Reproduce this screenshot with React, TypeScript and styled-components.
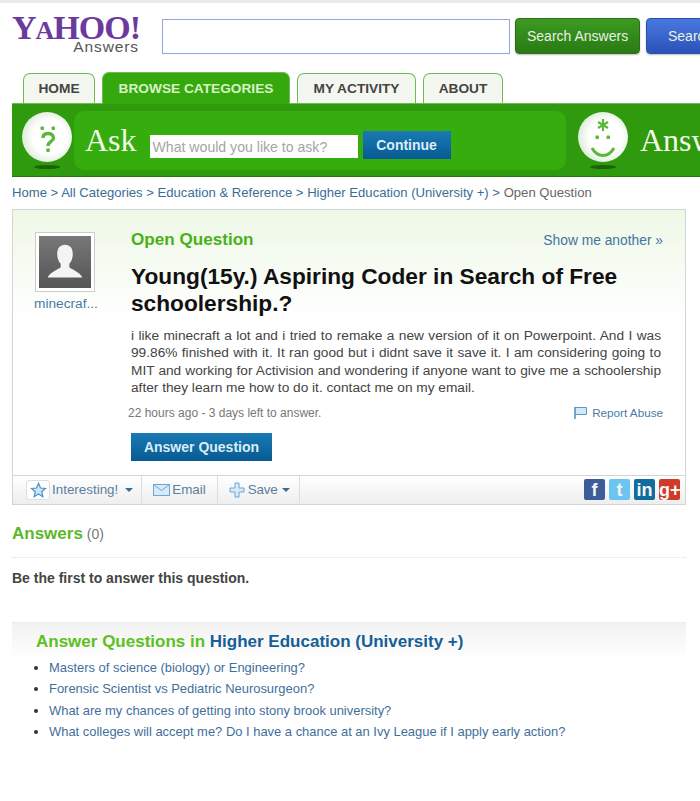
import React from 'react';
import styled, { createGlobalStyle } from 'styled-components';

const GlobalStyle = createGlobalStyle`
  html, body { margin: 0; padding: 0; background: #fff; }
  body { font-family: "Liberation Sans", Arial, sans-serif; overflow: hidden; }
`;

const Page = styled.div`
  width: 700px;
  height: 801px;
  overflow: hidden;
  border-top: 3px solid #e9e9ee;
  box-sizing: border-box;
`;

const Header = styled.header`
  display: flex;
  align-items: flex-start;
  height: 70px;
  padding: 15px 0 0 12px;
  box-sizing: border-box;
  white-space: nowrap;
`;

const Logo = styled.div`
  width: 150px;
  flex: none;
  margin-top: -2px;
`;

const LogoMark = styled.div`
  font: bold 34px/24px "Liberation Serif", serif;
  color: #6b3a9e;
  letter-spacing: -1px;
  height: 24px;
  & small { font-size: 26px; }
`;

const LogoSub = styled.div`
  font-size: 15.5px;
  line-height: 14px;
  letter-spacing: 0.9px;
  color: #555;
  width: 127px;
  text-align: right;
`;

const SearchInput = styled.div`
  width: 348px;
  height: 35px;
  flex: none;
  box-sizing: border-box;
  border: 1px solid #8ea8e8;
  margin-top: 1px;
  background: #fff;
`;

const SearchButton = styled.div<{ $tone: 'green' | 'blue' }>`
  flex: none;
  width: ${(p) => (p.$tone === 'green' ? '125px' : '90px')};
  height: 36px;
  margin-left: ${(p) => (p.$tone === 'green' ? '5px' : '6px')};
  padding-left: ${(p) => (p.$tone === 'green' ? '11px' : '21px')};
  box-sizing: border-box;
  border-radius: 4px;
  font-size: 14px;
  line-height: 35px;
  color: #e6f2e2;
  background: ${(p) =>
    p.$tone === 'green'
      ? 'linear-gradient(#3c9a22, #2a7a14)'
      : 'linear-gradient(#4a78e0, #2a52b8)'};
  border: 1px solid ${(p) => (p.$tone === 'green' ? '#2b6e18' : '#2a4fa8')};
  box-shadow: 0 1px 2px rgba(0, 0, 0, 0.25);
`;

const Tabs = styled.nav`
  display: flex;
  align-items: flex-end;
  gap: 7px;
  height: 30px;
  padding-left: 23px;
  white-space: nowrap;
`;

const Tab = styled.div<{ $active?: boolean; $width: number }>`
  width: ${(p) => p.$width}px;
  height: ${(p) => (p.$active ? '32px' : '30px')};
  box-sizing: border-box;
  text-align: center;
  font-weight: bold;
  font-size: 13.7px;
  line-height: ${(p) => (p.$active ? '31px' : '30px')};
  border-radius: 7px 7px 0 0;
  border: 1px solid #6fba55;
  border-bottom: none;
  color: ${(p) => (p.$active ? '#d8f2c4' : '#444')};
  background: ${(p) => (p.$active ? '#35a80e' : '#f4f7ef')};
  ${(p) => p.$active && 'margin-bottom: -1px; position: relative;'}
`;

const AskBand = styled.section`
  display: flex;
  align-items: center;
  height: 74px;
  margin-left: 12px;
  background: #2f9a0d;
  border-top: 1px solid #6fba55;
  border-bottom: 1px solid #25760c;
  box-sizing: border-box;
  white-space: nowrap;
  overflow: hidden;
`;

const Face = styled.div<{ $first?: boolean }>`
  position: relative;
  flex: none;
  width: 50px;
  height: 50px;
  margin-top: -6px;
  margin-left: ${(p) => (p.$first ? '10px' : '0')};
  border-radius: 50%;
  background: radial-gradient(circle at 55% 50%, #fff 0 45%, #dcebd8 75%, #f2f7ef 100%);
  & svg { display: block; }
  &::after {
    content: '';
    position: absolute;
    left: 12px;
    bottom: -7px;
    width: 26px;
    height: 4px;
    border-radius: 50%;
    background: #1d6208;
  }
`;

const AskPanel = styled.div`
  display: flex;
  align-items: center;
  flex: none;
  width: 492px;
  height: 59px;
  margin-left: 2px;
  margin-right: 12px;
  padding-left: 11px;
  box-sizing: border-box;
  background: #35ad0e;
  border-radius: 10px;
`;

const AskWord = styled.div`
  font: 32px/40px "Liberation Serif", serif;
  color: #f3fbe8;
  flex: none;
`;

const AskInput = styled.div`
  flex: none;
  width: 208px;
  height: 23px;
  margin: 12px 0 0 13px;
  padding-left: 3px;
  box-sizing: border-box;
  background: #fff;
  color: #a5a5a5;
  font-size: 14.1px;
  line-height: 24px;
`;

const BlueButton = styled.div<{ $width: number; $height: number }>`
  flex: none;
  width: ${(p) => p.$width}px;
  height: ${(p) => p.$height}px;
  line-height: ${(p) => p.$height}px;
  text-align: center;
  font-weight: bold;
  font-size: 14px;
  color: #dcecf6;
  background: linear-gradient(#1a7ab4, #075a92);
`;

const ContinueButton = styled(BlueButton)`
  margin: 10px 0 0 5px;
`;

const AnswerWord = styled(AskWord)`
  margin-left: 12px;
`;

const Breadcrumb = styled.div`
  margin: 8px 0 8px 12px;
  font-size: 13.1px;
  line-height: 16px;
  height: 16px;
  color: #3a6d96;
  white-space: nowrap;
  & span { color: #666; }
`;

const Card = styled.article`
  width: 674px;
  margin-left: 12px;
  box-sizing: border-box;
  border: 1px solid #d4d4d4;
  background: linear-gradient(#eef8e6 0, #fff 110px);
`;

const CardBody = styled.div`
  display: flex;
  height: 265px;
  box-sizing: border-box;
`;

const Asker = styled.div`
  width: 118px;
  flex: none;
  padding: 22px 0 0 22px;
  box-sizing: border-box;
`;

const Avatar = styled.div`
  width: 52px;
  height: 52px;
  box-sizing: content-box;
  padding: 3px;
  border: 1px solid #ccc;
  background: #fff;
  & svg { display: block; }
`;

const AskerName = styled.div`
  margin: 4px 0 0 -1px;
  font-size: 13.7px;
  line-height: 16px;
  color: #4a7ba6;
`;

const QuestionMain = styled.div`
  flex: 1;
  padding: 19px 22px 0 0;
  min-width: 0;
`;

const QuestionTop = styled.div`
  display: flex;
  justify-content: space-between;
  align-items: baseline;
`;

const OpenLabel = styled.div`
  font-weight: bold;
  font-size: 17.1px;
  line-height: 22px;
  color: #49b118;
`;

const ShowAnother = styled.div`
  font-size: 13.8px;
  color: #3f74a3;
  white-space: nowrap;
`;

const Title = styled.h1`
  margin: 12px 0 0;
  font-size: 22.7px;
  line-height: 27px;
  font-weight: bold;
  color: #111;
  white-space: nowrap;
`;

const Description = styled.p`
  margin: 10px 0 0;
  width: 530px;
  font-size: 13.7px;
  line-height: 17.4px;
  color: #444;
  text-align: justify;
`;

const MetaRow = styled.div`
  display: flex;
  justify-content: space-between;
  align-items: center;
  margin: 7px 0 0 -3px;
  height: 18px;
`;

const MetaText = styled.div`
  font-size: 12px;
  color: #777;
`;

const ReportLink = styled.div`
  display: flex;
  align-items: center;
  gap: 5px;
  font-size: 11.7px;
  color: #4a7ba6;
`;

const AnswerButton = styled(BlueButton)`
  margin-top: 11px;
`;

const ActionBar = styled.div`
  display: flex;
  align-items: stretch;
  height: 29px;
  border-top: 1px solid #d4d4d4;
  background: linear-gradient(#fff, #eeeeee);
  padding: 0 0 1px 13px;
  box-sizing: border-box;
  white-space: nowrap;
`;

const ActionItem = styled.div<{ $pad: number }>`
  display: flex;
  align-items: center;
  gap: 2px;
  padding-right: ${(p) => p.$pad}px;
  margin-right: 11px;
  border-right: 1px solid #ddd;
  font-size: 13.4px;
  color: #5a7f9e;
`;

const StarBox = styled.span`
  display: flex;
  align-items: center;
  justify-content: center;
  width: 24px;
  height: 20px;
  box-sizing: border-box;
  border: 1px solid #ddd;
  border-radius: 3px;
  background: #fff;
`;

const Caret = styled.span<{ $gap: number }>`
  width: 0;
  height: 0;
  margin-left: ${(p) => p.$gap}px;
  border-left: 4px solid transparent;
  border-right: 4px solid transparent;
  border-top: 4px solid #3a6d96;
`;

const SaveLabel = styled.span`
  margin-left: 1px;
  letter-spacing: -0.2px;
`;

const Socials = styled.div`
  display: flex;
  align-items: center;
  gap: 4px;
  margin-left: auto;
  padding-right: 5px;
`;

const Social = styled.div<{ $bg: string }>`
  width: 21px;
  height: 21px;
  border-radius: 2px;
  background: ${(p) => p.$bg};
  color: #f5f5f5;
  text-align: center;
  font-weight: bold;
  font-size: 18px;
  line-height: 23px;
  overflow: hidden;
`;

const AnswersHead = styled.div`
  margin: 19px 14px 0 12px;
  height: 33px;
  border-bottom: 1px dotted #ddd;
  font-size: 14px;
  color: #777;
  & b { font-size: 17px; color: #5cb82a; }
`;

const FirstNote = styled.div`
  margin: 12px 0 0 12px;
  font-weight: bold;
  font-size: 14px;
  line-height: 16px;
  color: #444;
`;

const RelatedBox = styled.section`
  width: 674px;
  margin: 36px 0 0 12px;
  border-top: 1px dotted #ddd;
  background: linear-gradient(#f2f2f2, #fff 36px);
  padding-top: 8px;
`;

const RelatedTitle = styled.h2`
  margin: 0 0 0 24px;
  font-size: 17px;
  line-height: 22px;
  font-weight: bold;
  color: #5cc01e;
  & span { color: #155f96; }
`;

const RelatedList = styled.ul`
  margin: 4px 0 0;
  padding: 0 0 0 37px;
  font-size: 12.95px;
  line-height: 21.3px;
  color: #333;
  & a { color: #3f6f9c; }
`;

const faceQuestion = (
  <svg width="50" height="50" viewBox="0 0 50 50">
    <rect x="18.500" y="14.500" width="3.500" height="3.500" rx="1" fill="#5bb83a" />
    <rect x="29.500" y="14.500" width="3.500" height="3.500" rx="1" fill="#5bb83a" />
    <path d="M21 26c0-3 2-4.500 5-4.500s5.500 1.500 5.500 4.500c0 3.500-5.500 3.500-5.500 8" fill="none" stroke="#5bb83a" strokeWidth="3.400" />
    <rect x="24.200" y="36.500" width="3.600" height="3.600" rx="1" fill="#5bb83a" />
  </svg>
);

const faceSmile = (
  <svg width="50" height="50" viewBox="0 0 50 50">
    <path d="M25 7v12M20 10l10 6M30 10l-10 6" stroke="#5bb83a" strokeWidth="2.200" fill="none" />
    <rect x="17.500" y="23.500" width="3.500" height="3.500" rx="1" fill="#5bb83a" />
    <rect x="28.500" y="23.500" width="3.500" height="3.500" rx="1" fill="#5bb83a" />
    <path d="M14 36c3 5.500 7 7.500 11 7.500s8-2 11-7.500" fill="none" stroke="#5bb83a" strokeWidth="3" />
  </svg>
);

const questions = [
  'Masters of science (biology) or Engineering?',
  'Forensic Scientist vs Pediatric Neurosurgeon?',
  'What are my chances of getting into stony brook university?',
  'What colleges will accept me? Do I have a chance at an Ivy League if I apply early action?',
];

export default function App() {
  return (
    <Page>
      <GlobalStyle />
      <Header>
        <Logo>
          <LogoMark>Y<small>A</small>HOO!</LogoMark>
          <LogoSub>Answers</LogoSub>
        </Logo>
        <SearchInput />
        <SearchButton $tone="green">Search Answers</SearchButton>
        <SearchButton $tone="blue">Search Web</SearchButton>
      </Header>
      <Tabs>
        <Tab $width={72}>HOME</Tab>
        <Tab $width={188} $active>BROWSE CATEGORIES</Tab>
        <Tab $width={119}>MY ACTIVITY</Tab>
        <Tab $width={80}>ABOUT</Tab>
      </Tabs>
      <AskBand>
        <Face $first>{faceQuestion}</Face>
        <AskPanel>
          <AskWord>Ask</AskWord>
          <AskInput>What would you like to ask?</AskInput>
          <ContinueButton $width={88} $height={28}>Continue</ContinueButton>
        </AskPanel>
        <Face>{faceSmile}</Face>
        <AnswerWord>Answers</AnswerWord>
      </AskBand>
      <Breadcrumb>
        Home &gt; All Categories &gt; Education &amp; Reference &gt; Higher Education (University +) &gt; <span>Open Question</span>
      </Breadcrumb>
      <Card>
        <CardBody>
          <Asker>
            <Avatar>
              <svg width="52" height="52" viewBox="0 0 60 60">
                <defs>
                  <linearGradient id="av" x1="0" y1="0" x2="0" y2="1">
                    <stop offset="0" stopColor="#777" />
                    <stop offset="1" stopColor="#555" />
                  </linearGradient>
                </defs>
                <rect width="60" height="60" fill="url(#av)" />
                <path d="M30 10c6 0 9 4 9 11 0 5-2 9-4 11v4c3 3 12 5 15 12H10c3-7 12-9 15-12v-4c-2-2-4-6-4-11 0-7 3-11 9-11z" fill="#f4f4f4" />
              </svg>
            </Avatar>
            <AskerName>minecraf...</AskerName>
          </Asker>
          <QuestionMain>
            <QuestionTop>
              <OpenLabel>Open Question</OpenLabel>
              <ShowAnother>Show me another »</ShowAnother>
            </QuestionTop>
            <Title>Young(15y.) Aspiring Coder in Search of Free<br />schoolership.?</Title>
            <Description>
              i like minecraft a lot and i tried to remake a new version of it on Powerpoint. And I was
              99.86% finished with it. It ran good but i didnt save it save it. I am considering going to
              MIT and working for Activision and wondering if anyone want to give me a schoolership
              after they learn me how to do it. contact me on my email.
            </Description>
            <MetaRow>
              <MetaText>22 hours ago - 3 days left to answer.</MetaText>
              <ReportLink>
                <svg width="13" height="12" viewBox="0 0 13 12">
                  <path d="M1 .5H12.500V7.500H1" fill="#d5e8f5" stroke="#5a9ac8" />
                  <path d="M1 0V12" stroke="#4a8fc0" strokeWidth="1.500" />
                </svg>
                Report Abuse
              </ReportLink>
            </MetaRow>
            <AnswerButton $width={141} $height={28}>Answer Question</AnswerButton>
          </QuestionMain>
        </CardBody>
        <ActionBar>
          <ActionItem $pad={8}>
            <StarBox>
              <svg width="17" height="16" viewBox="0 0 24 24">
                <path d="M12 2l3 7 7.500 .7-5.700 5 1.800 7.300L12 18l-6.600 4 1.800-7.300-5.700-5L9 9z" fill="#cfe6f7" stroke="#4a90c8" strokeWidth="1.800" />
              </svg>
            </StarBox>
            Interesting!<Caret $gap={5} />
          </ActionItem>
          <ActionItem $pad={11}>
            <svg width="17" height="12" viewBox="0 0 17 12">
              <rect x=".5" y=".5" width="16" height="11" fill="#d8eaf8" stroke="#6ba6d6" />
              <path d="M.5 .5l8 6 8-6" fill="none" stroke="#6ba6d6" />
            </svg>
            Email
          </ActionItem>
          <ActionItem $pad={9}>
            <svg width="16" height="16" viewBox="0 0 16 16">
              <path d="M6 1h4v5h5v4h-5v5H6v-5H1V6h5z" fill="#d8eaf8" stroke="#6ba6d6" />
            </svg>
            <SaveLabel>Save</SaveLabel><Caret $gap={3} />
          </ActionItem>
          <Socials>
            <Social $bg="#3f5c9a">f</Social>
            <Social $bg="#6cc5ee">t</Social>
            <Social $bg="#0f6d9f">in</Social>
            <Social $bg="#cf3b28">g+</Social>
          </Socials>
        </ActionBar>
      </Card>
      <AnswersHead><b>Answers</b> (0)</AnswersHead>
      <FirstNote>Be the first to answer this question.</FirstNote>
      <RelatedBox>
        <RelatedTitle>Answer Questions in <span>Higher Education (University +)</span></RelatedTitle>
        <RelatedList>
          {questions.map((q) => (
            <li key={q}><a>{q}</a></li>
          ))}
        </RelatedList>
      </RelatedBox>
    </Page>
  );
}
